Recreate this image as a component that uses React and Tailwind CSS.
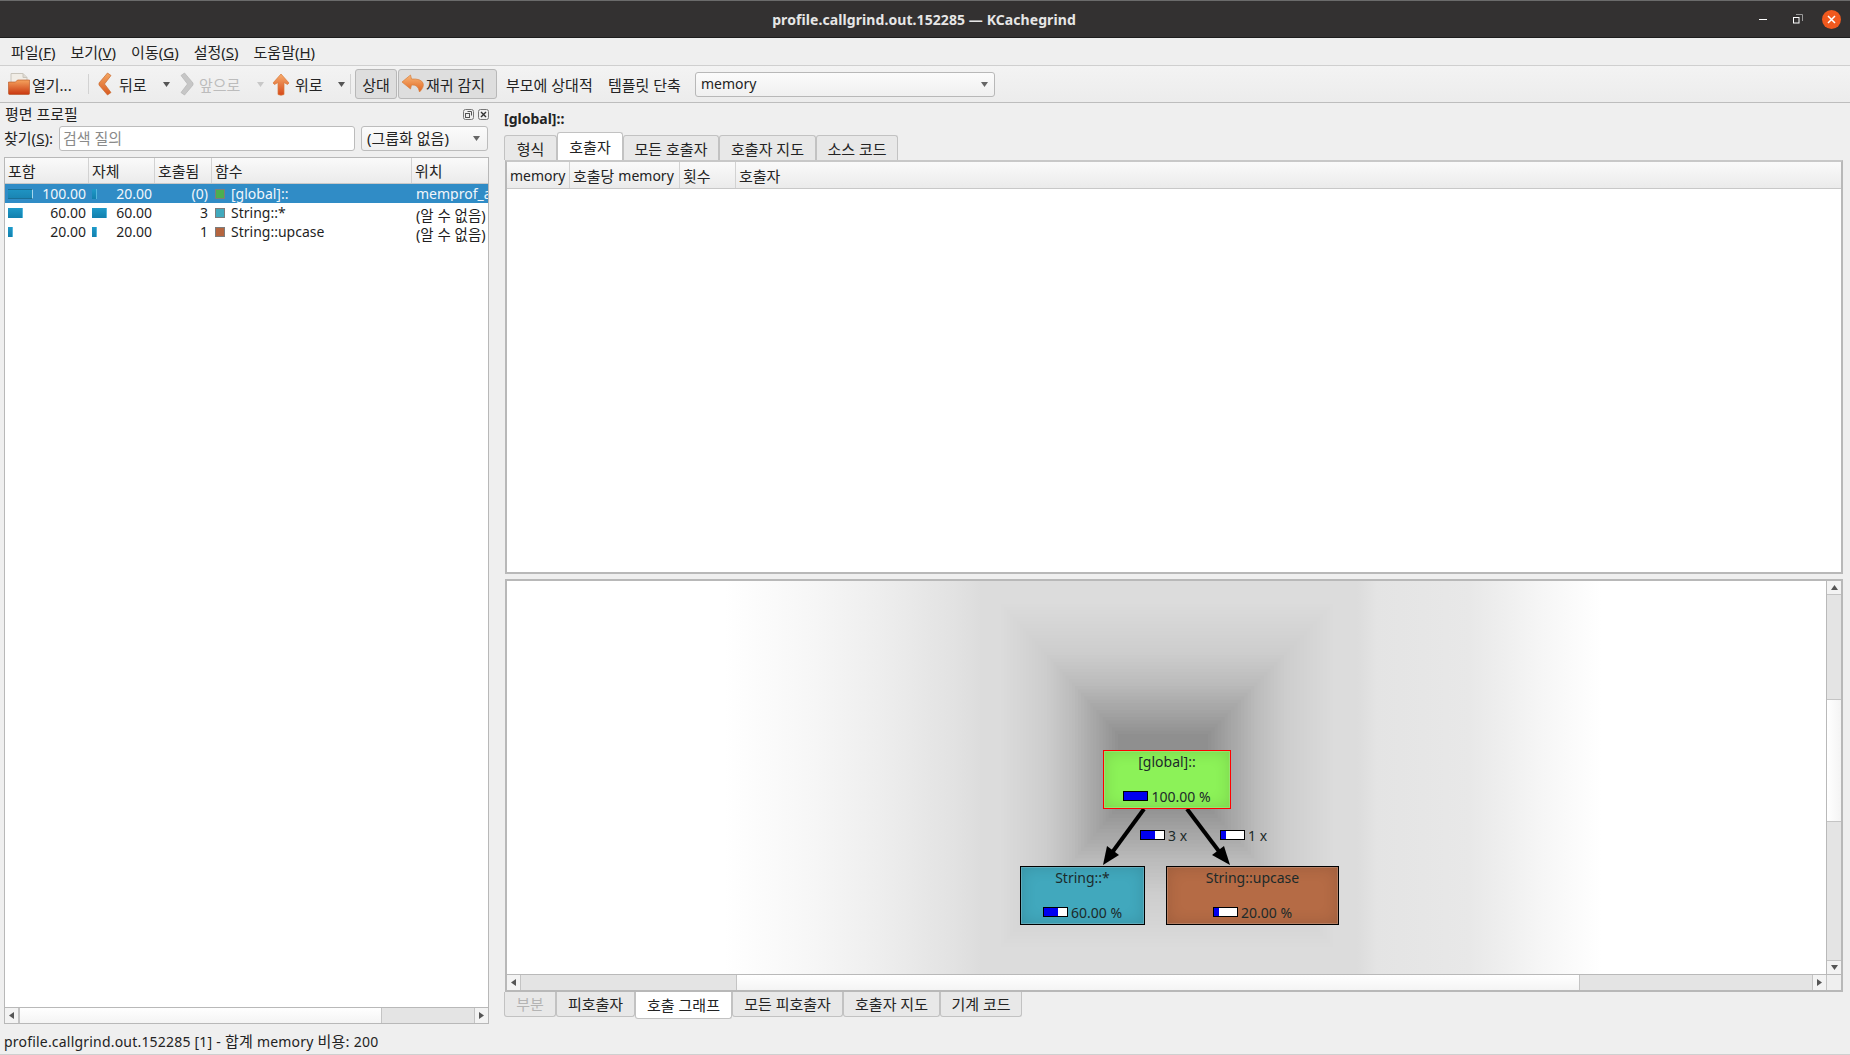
import React from "react";

const Tri = ({ dir = "down", c = "#555", s = 9 }) => {
  const p = { down: "1,2 8,2 4.5,7", up: "1,7 8,7 4.5,2", left: "7,1 7,8 2,4.5", right: "2,1 2,8 7,4.5" }[dir];
  return <svg width={s} height={s} viewBox="0 0 9 9" className="shrink-0"><polygon points={p} fill={c} /></svg>;
};

const Grad = ({ id, a = "#f7a25c", b = "#d9531a" }) => (
  <linearGradient id={id} x1="0" y1="0" x2="0" y2="1"><stop offset="0" stopColor={a} /><stop offset="1" stopColor={b} /></linearGradient>
);

const FolderIcon = () => (
  <svg width="24" height="24" viewBox="0 0 24 24" className="shrink-0">
    <defs><Grad id="fo" a="#f5a35e" b="#c9360f" /></defs>
    <path d="M4 1.5h12l4 4v7H4z" fill="#f1ede6" stroke="#c9c5bc" />
    <path d="M16 1.5v4h4" fill="#dedad2" stroke="#c9c5bc" />
    <path d="M1.5 10h7l2-2h12v13.5a1 1 0 0 1-1 1h-19a1 1 0 0 1-1-1z" fill="url(#fo)" stroke="#b5501e" strokeWidth="0.6" />
  </svg>
);
const BackIcon = () => (
  <svg width="14" height="24" viewBox="0 0 14 24" className="shrink-0">
    <defs><Grad id="ba" a="#f4a763" b="#d85a20" /></defs>
    <path d="M9.5 1 L13 3.5 L6.5 12 L13 20.5 L9.5 23 L1 13 L1 11 Z" fill="url(#ba)" stroke="#c96a30" strokeWidth="0.7" strokeLinejoin="round" />
  </svg>
);
const FwdIcon = () => (
  <svg width="14" height="24" viewBox="0 0 14 24" className="shrink-0">
    <path d="M4.5 1 L1 3.5 L7.5 12 L1 20.5 L4.5 23 L13 13 L13 11 Z" fill="#c6c6c6" stroke="#b4b4b4" strokeWidth="0.7" strokeLinejoin="round" />
  </svg>
);
const UpIcon = () => (
  <svg width="18" height="23" viewBox="0 0 18 23" className="shrink-0">
    <defs><Grad id="up" a="#f7ae6e" b="#d6481a" /></defs>
    <path d="M9 1 L17 10 L15.5 11.5 L12 9.5 L12 21.5 Q9 23 6 21.5 L6 9.5 L2.5 11.5 L1 10 Z" fill="url(#up)" stroke="#d97a3a" strokeWidth="0.7" strokeLinejoin="round" />
  </svg>
);
const UndoIcon = () => (
  <svg width="24" height="20" viewBox="0 0 24 20" className="shrink-0">
    <defs><Grad id="un" a="#f8b779" b="#e0641f" /></defs>
    <path d="M9.5 1 L1 8 L9.5 15 L10.5 11 Q17 10 18.5 18 Q23.5 13 22 9 Q20 4.5 10.5 5 Z" fill="url(#un)" stroke="#d9803c" strokeWidth="0.7" strokeLinejoin="round" />
  </svg>
);

const M = ({ t, k }) => (
  <span className="whitespace-nowrap">{t}(<span className="underline">{k}</span>)</span>
);
const L = ({ children }) => <span className="text-[14px]">{children}</span>;

const Bar = ({ w, sel }) => (
  <div
    className={sel
      ? "h-[10px] shrink-0 bg-gradient-to-b from-[#1f93c2] to-[#1a85b3] border-t border-b border-[#1a6f97] border-r border-r-[#a7d6ee]"
      : "h-[10px] shrink-0 bg-gradient-to-b from-[#1f9ac9] to-[#1280ad] border-r border-[#55b7dd]"}
    style={{ width: w }}
  />
);

const rows = [
  { a: 25, ta: "100.00", b: 5, tb: "20.00", c: "(0)", col: "#4caf50", f: "[global]::", loc: "memprof_a", sel: true },
  { a: 15, ta: "60.00", b: 15, tb: "60.00", c: "3", col: "#41a9bd", f: "String::*", loc: "(알 수 없음)" },
  { a: 5, ta: "20.00", b: 5, tb: "20.00", c: "1", col: "#b5653f", f: "String::upcase", loc: "(알 수 없음)" },
];

const TH = ({ w, children, last }) => (
  <div className={`flex items-center pl-[3px] pt-[2px] h-full overflow-hidden whitespace-nowrap text-[15px] ${last ? "flex-1" : "border-r border-[#d2d2d2] shrink-0"}`} style={last ? undefined : { width: w }}>{children}</div>
);

const HScroll = ({ left, handle, corner }) => (
  <div className="h-[16px] shrink-0 flex border-t border-[#b9b9b9] bg-[#e4e4e4]">
    <div className="w-[14px] flex items-center justify-center bg-[#f3f3f3] border-r border-[#c4c4c4] shrink-0"><Tri dir="left" /></div>
    <div className="shrink-0" style={{ width: left }} />
    <div className="shrink-0 bg-gradient-to-b from-[#ffffff] to-[#f4f4f4] border-x border-[#c4c4c4]" style={{ width: handle }} />
    <div className="flex-1" />
    <div className="w-[14px] flex items-center justify-center bg-[#f3f3f3] border-l border-[#c4c4c4] shrink-0"><Tri dir="right" /></div>
    {corner && <div className="w-[15px] bg-[#efefef] border-l border-[#c4c4c4] shrink-0" />}
  </div>
);

const Tabs = ({ items, bottom }) => (
  <div className={`flex shrink-0 text-[15px] ${bottom ? "h-[27px] items-start" : "h-[28px] items-end"}`}>
    {items.map((t) => (
      <div
        key={t.t}
        style={{ width: t.w }}
        className={`flex items-center justify-center whitespace-nowrap shrink-0 border-[#c2c2c2] ${
          bottom ? "border-x border-b rounded-b-[3px]" : "border-x border-t rounded-t-[3px] pt-[2px]"
        } ${t.active ? (bottom ? "h-[27px] bg-white" : "h-[28px] bg-white") : "h-[25px] bg-[#e8e8e8]"} ${t.dis ? "text-[#b4b4b4]" : "text-[#232323]"}`}
      >
        {t.t}
      </div>
    ))}
  </div>
);

const Node = ({ x, y, w, border, bg, title, pct, barFill }) => (
  <div
    className="absolute h-[59px] border flex flex-col items-center text-[#1c2a2a]"
    style={{ left: x, top: y, width: w, borderColor: border, background: bg, boxShadow: "inset 0 0 16px rgba(0,0,0,0.14), inset 0 0 0 1px rgba(255,255,255,0.2)" }}
  >
    <div className="leading-[20px] mt-[1px]">{title}</div>
    <div className="flex items-center mt-auto mb-[1px] leading-[20px]">
      <div className="w-[25px] h-[10px] border border-black bg-white mr-[3px] flex mt-[-3px]">
        <div className="bg-[#0000f0] h-full" style={{ width: barFill }} />
      </div>
      <span>{pct}</span>
    </div>
  </div>
);

const Lab = ({ x, y, fill, t }) => (
  <div className="absolute flex items-center leading-[20px] text-[#1c2a2a]" style={{ left: x, top: y }}>
    <div className="w-[25px] h-[10px] border border-black bg-white mr-[3px] flex mt-[-3px]">
      <div className="bg-[#0000f0] h-full" style={{ width: fill }} />
    </div>
    <span>{t}</span>
  </div>
);

const LAYERS = 46;
const shade = Array.from({ length: LAYERS }, (_, i) => {
  const t = i / (LAYERS - 1);
  return {
    x: 472 + (611 - 472) * t,
    y: -2 + (153 + 2) * t,
    r: 850 + (701 - 850) * t,
    b: 392 + (226 - 392) * t,
    a: (0.002 + 0.022 * t * t + 0.004 * t) * (30 / LAYERS),
  };
});

const CallGraph = () => (
  <div className="relative flex-1 overflow-hidden bg-white text-[14px]">
    <svg width="1318" height="394" className="absolute left-0 top-0">
      <defs>
        <linearGradient id="hz" x1="0" y1="0" x2="1" y2="0">
          <stop offset="0" stopColor="#fff" />
          <stop offset="0.165" stopColor="#fff" />
          <stop offset="0.234" stopColor="#f6f6f6" />
          <stop offset="0.282" stopColor="#eeeeee" />
          <stop offset="0.34" stopColor="#e2e2e2" />
          <stop offset="0.36" stopColor="#dcdcdc" />
          <stop offset="0.645" stopColor="#dcdcdc" />
          <stop offset="0.66" stopColor="#e4e4e4" />
          <stop offset="0.73" stopColor="#e8e8e8" />
          <stop offset="0.785" stopColor="#f6f6f6" />
          <stop offset="0.83" stopColor="#fff" />
        </linearGradient>
      </defs>
      <rect width="1318" height="394" fill="url(#hz)" />
      {shade.map((s, i) => (
        <rect key={i} x={s.x} y={s.y} width={s.r - s.x} height={s.b - s.y} fill="#000" fillOpacity={s.a} />
      ))}
      <line x1="637" y1="228" x2="604" y2="273" stroke="#000" strokeWidth="4" />
      <polygon points="596,284 600,265 612,274" fill="#000" />
      <line x1="680" y1="228" x2="714" y2="273" stroke="#000" strokeWidth="4" />
      <polygon points="723,284 705,274 717,265" fill="#000" />
    </svg>
    <Node x={596} y={169} w={128} border="#ff0000" bg="#8cf258" title="[global]::" pct="100.00 %" barFill="100%" />
    <Node x={513} y={285} w={125} border="#000" bg="#41a8bd" title="String::*" pct="60.00 %" barFill="60%" />
    <Node x={659} y={285} w={173} border="#000" bg="#b56b45" title="String::upcase" pct="20.00 %" barFill="20%" />
    <Lab x={633} y={245} fill="60%" t="3 x" />
    <Lab x={713} y={245} fill="20%" t="1 x" />
  </div>
);

export default function App() {
  return (
    <div className="w-[1850px] h-[1055px] flex flex-col overflow-hidden bg-[#efefef] text-[14px] leading-none text-[#232323] font-['Noto_Sans','Noto_Sans_CJK_KR',sans-serif]">
      {/* title bar */}
      <div className="h-[38px] shrink-0 flex items-center bg-[#333131] border-t border-[#6b6b6b] border-b-[#1d1d1d] border-b">
        <div className="flex-1" />
        <div className="font-bold text-[14px] tracking-[0.08px] mt-[2px] ml-[7px] text-[#e6e6e6] whitespace-nowrap">profile.callgrind.out.152285 — KCachegrind</div>
        <div className="flex-1 flex justify-end items-center pr-[9px]">
          <div className="w-[8px] h-[1px] bg-white mr-[26px]" />
          <svg width="10" height="10" viewBox="0 0 10 10" className="mr-[19px]"><path d="M3 0.5h6.5v6.5" fill="none" stroke="#9a9a9a" /><rect x="0.5" y="3.5" width="5.5" height="5.5" fill="none" stroke="#fff" /></svg>
          <div className="w-[19px] h-[19px] rounded-full bg-[#f0591e] flex items-center justify-center">
            <svg width="9" height="9" viewBox="0 0 9 9"><path d="M1 1l7 7M8 1L1 8" stroke="#fff" strokeWidth="1.5" /></svg>
          </div>
        </div>
      </div>
      {/* menu */}
      <div className="h-[28px] shrink-0 flex items-center gap-[15px] pl-[11px] pt-[1px] border-b border-[#cfcfcf] text-[15px]">
        <M t="파일" k="F" /><M t="보기" k="V" /><M t="이동" k="G" /><M t="설정" k="S" /><M t="도움말" k="H" />
      </div>
      {/* toolbar */}
      <div className="h-[37px] shrink-0 flex items-center pl-[7px] border-b border-[#bdbdbd] bg-gradient-to-b from-[#f3f3f3] to-[#ececec] text-[15px]">
        <FolderIcon />
        <span className="ml-[1px] w-[56px] whitespace-nowrap pt-[2px]">열기...</span>
        <div className="w-[1px] h-[20px] bg-[#d2d2d2]" />
        <div className="ml-[9px]"><BackIcon /></div>
        <span className="ml-[7px] w-[43px] whitespace-nowrap pt-[2px]">뒤로</span>
        <Tri />
        <div className="ml-[9px]"><FwdIcon /></div>
        <span className="ml-[5px] w-[48px] whitespace-nowrap pt-[2px] text-[#bcbcbc]">앞으로</span>
        <div className="ml-[9px]"><Tri c="#c8c8c8" /></div>
        <div className="ml-[7px]"><UpIcon /></div>
        <span className="ml-[5px] w-[42px] whitespace-nowrap pt-[2px]">위로</span>
        <Tri />
        <div className="ml-[4px] w-[1px] h-[20px] bg-[#d2d2d2]" />
        <div className="ml-[4px] w-[42px] h-[30px] flex items-center justify-center pt-[2px] bg-[#dedede] border border-[#b8b8b8] rounded-[3px]">상대</div>
        <div className="ml-[1px] w-[99px] h-[30px] flex items-center pl-[2px] gap-[1px] bg-[#dedede] border border-[#b8b8b8] rounded-[3px] whitespace-nowrap"><UndoIcon /><span className="pt-[2px]">재귀 감지</span></div>
        <span className="ml-[9px] w-[102px] whitespace-nowrap pt-[2px]">부모에 상대적</span>
        <span className="w-[87px] whitespace-nowrap pt-[2px]">템플릿 단축</span>
        <div className="w-[300px] h-[25px] flex items-center justify-between px-[5px] border border-[#b8b8b8] rounded-[3px] bg-gradient-to-b from-[#fbfbfb] to-[#f0f0f0]">
          <L>memory</L>
          <Tri c="#666" />
        </div>
      </div>
      {/* main */}
      <div className="flex-1 flex min-h-0">
        {/* left dock */}
        <div className="w-[490px] shrink-0 flex flex-col pl-[4px] pr-[1px] pb-[7px]">
          <div className="h-[23px] shrink-0 flex items-center text-[15px]">
            <span className="flex-1 pl-[1px]">평면 프로필</span>
            <svg width="11" height="11" viewBox="0 0 11 11" className="mr-[4px]"><rect x="0.5" y="0.5" width="10" height="10" rx="2" fill="none" stroke="#777" /><rect x="2.5" y="4.5" width="4" height="4" fill="none" stroke="#555" /><path d="M4.5 2.5h4v4" fill="none" stroke="#555" /></svg>
            <svg width="11" height="11" viewBox="0 0 11 11"><rect x="0.5" y="0.5" width="10" height="10" rx="2" fill="none" stroke="#777" /><path d="M3 3l5 5M8 3L3 8" stroke="#333" strokeWidth="1.4" /></svg>
          </div>
          <div className="h-[25px] shrink-0 flex items-center text-[15px]">
            <span className="w-[55px] whitespace-nowrap shrink-0"><M t="찾기" k="S" />:</span>
            <div className="w-[296px] h-[25px] shrink-0 flex items-center px-[3px] bg-white border border-[#bcbcbc] rounded-[3px] text-[#8a8a8a]">검색 질의</div>
            <div className="ml-[6px] w-[127px] h-[25px] shrink-0 flex items-center justify-between pl-[5px] pr-[6px] border border-[#bcbcbc] rounded-[3px] bg-gradient-to-b from-[#fbfbfb] to-[#f0f0f0] whitespace-nowrap">
              <span>(그룹화 없음)</span><Tri c="#666" />
            </div>
          </div>
          <div className="mt-[6px] flex-1 min-h-0 flex flex-col border border-[#b8b8b8] bg-white">
            <div className="h-[26px] shrink-0 flex items-center border-b border-[#c8c8c8] bg-gradient-to-b from-[#fafafa] to-[#ebebeb]">
              <TH w={84}>포함</TH><TH w={66}>자체</TH><TH w={57}>호출됨</TH><TH w={200}>함수</TH><TH last>위치</TH>
            </div>
            <div className="flex-1 min-h-0">
              {rows.map((r) => (
                <div key={r.f} className={`h-[19px] flex items-center ${r.sel ? "bg-[#308cc6] text-[#f0f6fb]" : "text-[#1f1f1f]"}`}>
                  <div className="w-[84px] shrink-0 flex items-center justify-between pl-[3px] pr-[3px]"><Bar w={r.a} sel={r.sel} /><span>{r.ta}</span></div>
                  <div className="w-[66px] shrink-0 flex items-center justify-between pl-[3px] pr-[3px]"><Bar w={r.b} /><span>{r.tb}</span></div>
                  <div className="w-[57px] shrink-0 text-right pr-[4px]">{r.c}</div>
                  <div className="w-[200px] shrink-0 flex items-center pl-[3px] gap-[6px]">
                    <div className="w-[10px] h-[10px] border border-[#7d7d7d]" style={{ background: r.col }} />
                    <span>{r.f}</span>
                  </div>
                  <div className={`flex-1 min-w-0 whitespace-nowrap pl-[4px] ${r.sel ? "overflow-hidden" : "pt-[6px] text-[14.5px]"}`}>{r.loc}</div>
                </div>
              ))}
            </div>
            <HScroll left={0} handle={363} />
          </div>
        </div>
        {/* right */}
        <div className="flex-1 min-w-0 flex flex-col pl-[14px] pr-[7px] pb-[12px]">
          <div className="h-[29px] shrink-0 flex items-center pt-[3px] font-bold text-[14px]">[global]::</div>
          <Tabs items={[{ t: "형식", w: 53 }, { t: "호출자", w: 66, active: true }, { t: "모든 호출자", w: 96 }, { t: "호출자 지도", w: 97 }, { t: "소스 코드", w: 82 }]} />
          <div className="h-[414px] shrink-0 flex flex-col border-2 border-[#b8b8b8] border-t-[#c8c8c8] bg-white ml-[1px]">
            <div className="h-[27px] shrink-0 flex items-center border-b border-[#c8c8c8] bg-gradient-to-b from-[#fafafa] to-[#ebebeb]">
              <TH w={63}><L>memory</L></TH><TH w={110}>호출당&nbsp;<L>memory</L></TH><TH w={56}>횟수</TH><TH last>호출자</TH>
            </div>
          </div>
          <div className="h-[5px] shrink-0" />
          <div className="flex-1 min-h-0 flex flex-col border-2 border-[#b8b8b8] bg-white ml-[1px]">
            <div className="flex-1 min-h-0 flex">
              <CallGraph />
              <div className="w-[15px] shrink-0 flex flex-col border-l border-[#b9b9b9] bg-[#e4e4e4]">
                <div className="h-[14px] flex items-center justify-center bg-[#f3f3f3] border-b border-[#c4c4c4]"><Tri dir="up" /></div>
                <div className="h-[104px]" />
                <div className="h-[123px] bg-gradient-to-r from-[#ffffff] to-[#f4f4f4] border-y border-[#c4c4c4]" />
                <div className="flex-1" />
                <div className="h-[14px] flex items-center justify-center bg-[#f3f3f3] border-t border-[#c4c4c4]"><Tri dir="down" /></div>
              </div>
            </div>
            <HScroll handle={844} left={215} corner />
          </div>
          <Tabs bottom items={[{ t: "부분", w: 52, dis: true }, { t: "피호출자", w: 79 }, { t: "호출 그래프", w: 97, active: true }, { t: "모든 피호출자", w: 111 }, { t: "호출자 지도", w: 97 }, { t: "기계 코드", w: 82 }]} />
        </div>
      </div>
      {/* status */}
      <div className="h-[24px] shrink-0 flex items-center pl-[4px] pb-[2px] border-b border-[#cfcfcf] whitespace-nowrap tracking-[0.2px]">
        profile.callgrind.out.152285 [1] - <span className="text-[15px] mx-[4px]">합계</span> memory <span className="text-[15px] mx-[4px]">비용:</span> 200
      </div>
    </div>
  );
}
